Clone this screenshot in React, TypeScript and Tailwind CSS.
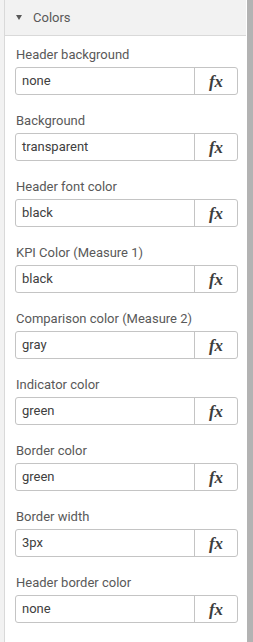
const fields: { label: string; value: string }[] = [
  { label: "Header background", value: "none" },
  { label: "Background", value: "transparent" },
  { label: "Header font color", value: "black" },
  { label: "KPI Color (Measure 1)", value: "black" },
  { label: "Comparison color (Measure 2)", value: "gray" },
  { label: "Indicator color", value: "green" },
  { label: "Border color", value: "green" },
  { label: "Border width", value: "3px" },
  { label: "Header border color", value: "none" },
];

function Field({ label, value }: { label: string; value: string }) {
  return (
    <div className="flex flex-col">
      <div className="h-[16px] pl-[1px] text-[13px] leading-[16px] text-[#595959]">{label}</div>
      <div className="mt-[4px] flex h-[28px] rounded-[3px] border border-[#c4c4c4] bg-white">
        <div className="flex flex-1 items-center px-[6px] text-[13px] text-[#404040]">{value}</div>
        <div className="flex w-[43px] items-center justify-center border-l border-[#c4c4c4]">
          <span className="font-['Liberation_Serif',serif] text-[17px] font-bold italic leading-none text-[#3d3d3d]">
            fx
          </span>
        </div>
      </div>
    </div>
  );
}

export default function App() {
  return (
    <div className="flex h-[642px] w-[253px] bg-[#f2f2f2] font-['Roboto',sans-serif]">
      <div className="w-[4px]" />
      {/* panel */}
      <div className="flex w-[242px] flex-col border-l border-[#d9d9d9] bg-white">
        <div className="flex h-[36px] items-center border-b border-[#d9d9d9] bg-[#f2f2f2] pl-[11px]">
          <svg width="6" height="5" viewBox="0 0 6 5" className="mr-[11px]">
            <path d="M0 0h6L3 5z" fill="#595959" />
          </svg>
          <span className="text-[13px] text-[#595959]">Colors</span>
        </div>
        <div className="flex flex-col gap-[18px] pl-[10px] pr-[8px] pt-[11px]">
          {fields.map((f) => (
            <Field key={f.label} label={f.label} value={f.value} />
          ))}
        </div>
      </div>
      <div className="w-[1px] bg-white" />
      <div className="w-[6px] bg-[#b3b3b3]" />
    </div>
  );
}
